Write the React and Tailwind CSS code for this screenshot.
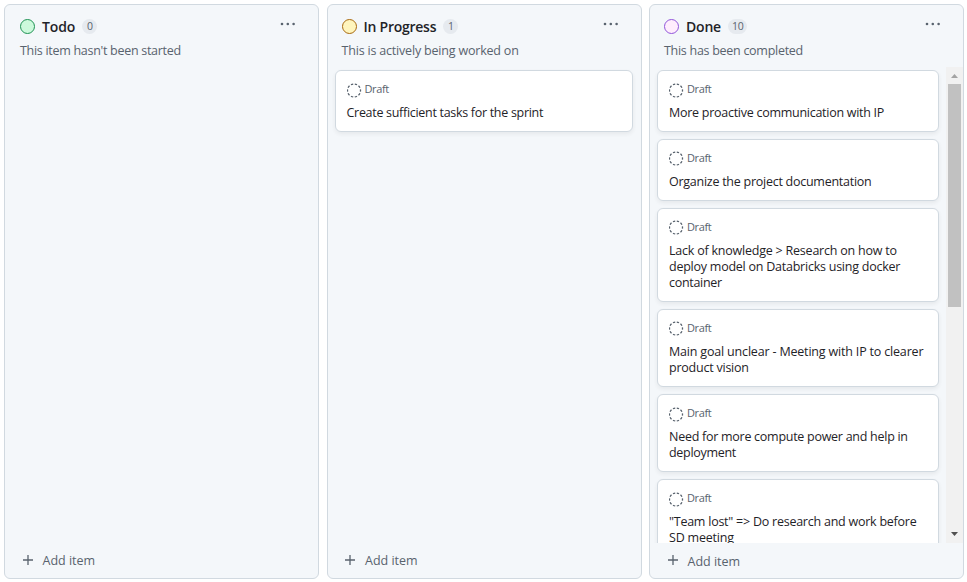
import React from "react";

const columns = [
  {
    name: "Todo",
    count: 0,
    note: "This item hasn't been started",
    dot: "border-[#1f9254] bg-[#ccf9dc]",
    headPad: "pl-[15px]",
    titleSpacing: "tracking-[-0.1px]",
    noteSpacing: "tracking-[-0.29px]",
    cards: [],
  },
  {
    name: "In Progress",
    count: 1,
    note: "This is actively being worked on",
    dot: "border-[#a8690f] bg-[#fff5bd]",
    headPad: "pl-[14px]",
    titleSpacing: "tracking-[-0.25px]",
    noteSpacing: "tracking-[-0.19px]",
    cards: [[["Create sufficient tasks for the sprint", "tracking-[-0.3px]"]]],
  },
  {
    name: "Done",
    count: 10,
    note: "This has been completed",
    dot: "border-[#9155da] bg-[#ffedfd]",
    headPad: "pl-[14px]",
    titleSpacing: "tracking-[-0.2px]",
    noteSpacing: "tracking-[-0.28px]",
    scroll: true,
    cards: [
      [["More proactive communication with IP", "tracking-[-0.27px]"]],
      [["Organize the project documentation", "tracking-[-0.26px]"]],
      [
        ["Lack of knowledge > Research on how to", "tracking-[-0.22px]"],
        ["deploy model on Databricks using docker", "tracking-[-0.24px]"],
        ["container", "tracking-[-0.3px]"],
      ],
      [
        ["Main goal unclear - Meeting with IP to clearer", "tracking-[-0.18px]"],
        ["product vision", "tracking-[-0.23px]"],
      ],
      [
        ["Need for more compute power and help in", "tracking-[-0.27px]"],
        ["deployment", "tracking-[-0.3px]"],
      ],
      [
        ['"Team lost" => Do research and work before', "tracking-[-0.24px]"],
        ["SD meeting", "tracking-[-0.2px]"],
      ],
    ],
  },
];

function DraftIcon() {
  return (
    <svg className="mt-px h-[15px] w-[15px] shrink-0" viewBox="0 0 15 15" fill="none">
      <circle cx="7" cy="7.5" r="6.5" stroke="#59636e" strokeWidth="1.3" pathLength="100" strokeDasharray="5.8 4.2" strokeDashoffset="2.9" />
    </svg>
  );
}

function Card({ lines }) {
  return (
    <article className="shrink-0 rounded-md border border-[#d1d9e0] bg-white px-[11px] pt-[11px] pb-[9.5px] shadow-[0_2px_4px_rgba(37,41,46,0.07)]">
      <div className="flex h-[15px] items-center gap-[3px] text-[11px] tracking-[-0.4px] text-[#59636e]">
        <DraftIcon />
        <span>Draft</span>
      </div>
      <div className="mt-[8px] text-[12.5px] leading-[16.3px] text-[#1f2328]">
        {lines.map(([line, spacing]) => (
          <p key={line} className={`whitespace-nowrap ${spacing}`}>{line}</p>
        ))}
      </div>
    </article>
  );
}

function Scrollbar() {
  return (
    <div className="-mt-[3px] flex w-[17px] shrink-0 flex-col items-center justify-between bg-[#f1f1f1]">
      <div className="flex flex-col items-center">
        <svg className="h-[17px] w-[17px]" viewBox="0 0 17 17"><path d="M5 11 8.5 7 12 11Z" fill="#a3a3a3" /></svg>
        <div className="h-[223px] w-[13px] bg-[#c1c1c1]" />
      </div>
      <svg className="h-[17px] w-[17px]" viewBox="0 0 17 17"><path d="M5 6 8.5 10 12 6Z" fill="#505050" /></svg>
    </div>
  );
}

function Column({ column }) {
  const { name, count, note, dot, headPad, titleSpacing, noteSpacing, scroll, cards } = column;
  return (
    <section className="flex h-[575px] w-[315px] shrink-0 flex-col overflow-hidden rounded-md border border-[#d1d9e0] bg-[#f4f7fa]">
      <header className={`h-[65px] shrink-0 pt-[12px] pr-[22px] ${headPad}`}>
        <div className="flex h-[20px] items-center">
          <span className={`-mt-px h-[15px] w-[15px] rounded-full border ${dot}`} />
          <h2 className={`ml-[7px] text-[14px] leading-[20px] font-semibold text-[#1f2328] ${titleSpacing}`}>{name}</h2>
          <span className="-mt-px ml-[7px] flex h-[15px] min-w-[15px] items-center justify-center rounded-full bg-[#e6eaef] px-[4px] text-[10.5px] leading-none tracking-[-0.3px] text-[#59636e]">{count}</span>
          <svg className="-mt-[6px] ml-auto h-[4px] w-[16px]" viewBox="0 0 16 4" fill="#59636e">
            <circle cx="2" cy="2" r="1.3" /><circle cx="7.8" cy="2" r="1.3" /><circle cx="13.6" cy="2" r="1.3" />
          </svg>
        </div>
        <p className={`mt-[5px] text-[12.5px] leading-[18px] whitespace-nowrap text-[#59636e] ${noteSpacing}`}>{note}</p>
      </header>
      <div className="flex min-h-0 flex-1">
        <div className={`flex min-w-0 flex-1 flex-col gap-[7px] pl-[7px] ${scroll ? "h-[473px] overflow-hidden pr-[7px]" : "pr-[8px]"}`}>
          {cards.map((lines) => <Card key={lines[0][0]} lines={lines} />)}
        </div>
        {scroll && <Scrollbar />}
      </div>
      <footer className="flex h-[35px] shrink-0 items-center gap-[9px] pl-[16.5px] text-[12.5px] font-medium text-[#59636e]">
        <svg className="-mt-[2px] h-[12px] w-[12px]" viewBox="0 0 12 12" fill="none" stroke="currentColor" strokeWidth="1.3">
          <path d="M6 1v10M1 6h10" />
        </svg>
        <span className={scroll ? "mt-[3px]" : "mt-px"}>Add item</span>
      </footer>
    </section>
  );
}

export default function App() {
  return (
    <main className="flex h-[582px] w-[967px] gap-[7.5px] overflow-hidden bg-white pt-[4px] pl-[4px] font-['Open_Sans','Noto_Sans',sans-serif]">
      {columns.map((column) => <Column key={column.name} column={column} />)}
    </main>
  );
}
